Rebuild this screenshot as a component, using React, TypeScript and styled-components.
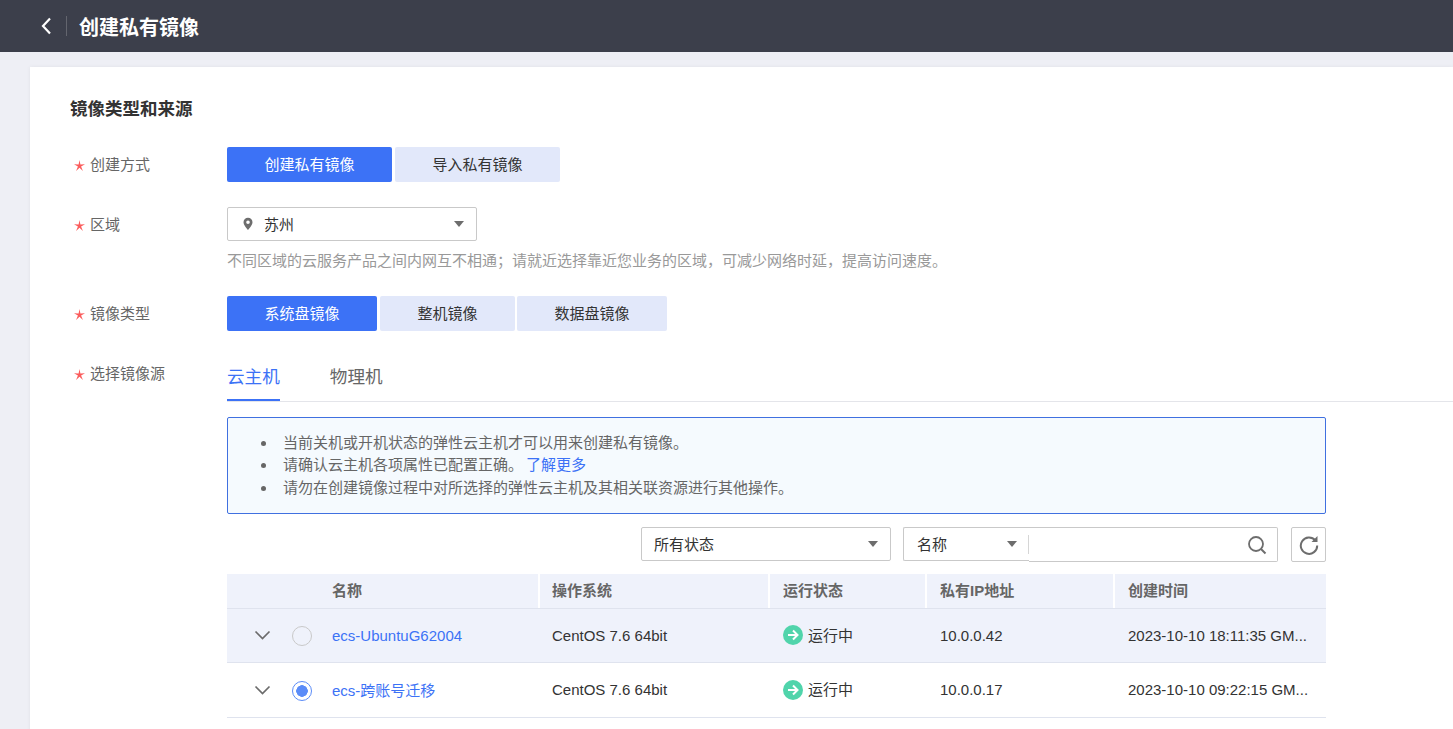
import styled, { createGlobalStyle } from "styled-components";

const GlobalStyle = createGlobalStyle`
  html, body {
    margin: 0;
    height: 100%;
    overflow: hidden;
    background: #eeeff5;
    font-family: "Liberation Sans", "Noto Sans CJK SC", sans-serif;
    font-size: 15px;
    color: #575d6c;
  }
  * { box-sizing: border-box; }
`;

const rows = [
  { name: "ecs-UbuntuG62004", ip: "10.0.0.42", time: "2023-10-10 18:11:35 GM...", selected: false },
  { name: "ecs-跨账号迁移", ip: "10.0.0.17", time: "2023-10-10 09:22:15 GM...", selected: true },
];

const Caret = () => (
  <svg width="10" height="6" viewBox="0 0 10 6">
    <path d="M0 0h10L5 6z" fill="#6d6d6d" />
  </svg>
);

const Star = () => (
  <StarIcon width="11" height="11" viewBox="0 0 11 11">
    <path d="M5.500 0 6.400 4.400 11 4.200 7.100 6.500 8.900 11 5.500 7.800 2.100 11 3.900 6.500 0 4.200 4.600 4.400z" fill="#fb5c5c" />
  </StarIcon>
);

export default function App() {
  return (
    <Page>
      <GlobalStyle />
      <TopBar>
        <svg width="12" height="18" viewBox="0 0 12 18">
          <path d="M10 1.500 3 9l7 7.500" fill="none" stroke="#fff" strokeWidth="2.200" />
        </svg>
        <TopDivider />
        <TopTitle>创建私有镜像</TopTitle>
      </TopBar>
      <Card>
        <SectionTitle>镜像类型和来源</SectionTitle>

        <FormRow $mb={25}>
          <Label><Star />创建方式</Label>
          <ButtonGroup>
            <SegButton $w={165} $active>创建私有镜像</SegButton>
            <SegButton $w={165} $ml={1}>导入私有镜像</SegButton>
          </ButtonGroup>
        </FormRow>

        <FormRow $mb={25}>
          <Label><Star />区域</Label>
          <div>
            <Select $w={250} $pad={14}>
              <svg width="12" height="14" viewBox="0 0 12 14">
                <path
                  fillRule="evenodd"
                  d="M6 .8a4.500 4.500 0 0 0-4.500 4.500C1.500 8.400 6 13 6 13s4.500-4.600 4.500-7.700A4.500 4.500 0 0 0 6 .8zm0 6.200a1.800 1.800 0 1 1 0-3.600 1.800 1.800 0 0 1 0 3.600z"
                  fill="#6d6d6d"
                />
              </svg>
              <RegionName>苏州</RegionName>
              <Caret />
            </Select>
            <Hint>不同区域的云服务产品之间内网互不相通；请就近选择靠近您业务的区域，可减少网络时延，提高访问速度。</Hint>
          </div>
        </FormRow>

        <FormRow $mb={25}>
          <Label><Star />镜像类型</Label>
          <ButtonGroup>
            <SegButton $w={150} $active>系统盘镜像</SegButton>
            <SegButton $w={135} $ml={1}>整机镜像</SegButton>
            <SegButton $w={150}>数据盘镜像</SegButton>
          </ButtonGroup>
        </FormRow>

        <FormRow $mb={0}>
          <Label><Star />选择镜像源</Label>
          <SourcePanel>
            <Tabs>
              <Tab $active>云主机</Tab>
              <Tab>物理机</Tab>
            </Tabs>
            <Content>
              <InfoBox>
                <li>当前关机或开机状态的弹性云主机才可以用来创建私有镜像。</li>
                <li>
                  请确认云主机各项属性已配置正确。<InfoLink>了解更多</InfoLink>
                </li>
                <li>请勿在创建镜像过程中对所选择的弹性云主机及其相关联资源进行其他操作。</li>
              </InfoBox>

              <Toolbar>
                <Select $w={250} $pad={12}>
                  <SelectText>所有状态</SelectText>
                  <Caret />
                </Select>
                <SearchGroup>
                  <Select $w={126} $pad={13} $joined>
                    <SelectText>名称</SelectText>
                    <Caret />
                    <SearchSep />
                  </Select>
                  <SearchInput>
                    <svg width="20" height="20" viewBox="0 0 20 20">
                      <circle cx="9" cy="9" r="7" fill="none" stroke="#6d6d6d" strokeWidth="1.800" />
                      <path d="m14 14 4.500 4.500" stroke="#6d6d6d" strokeWidth="2" />
                    </svg>
                  </SearchInput>
                </SearchGroup>
                <RefreshButton>
                  <svg width="20" height="20" viewBox="0 0 20 20">
                    <path d="M16.300 5.400A8.200 8.200 0 1 0 18.200 10.500" fill="none" stroke="#6d6d6d" strokeWidth="2" />
                    <path d="M18.500 1v6h-6z" fill="#6d6d6d" />
                  </svg>
                </RefreshButton>
              </Toolbar>

              <Table>
                <colgroup>
                  <col style={{ width: 313 }} />
                  <col style={{ width: 230 }} />
                  <col style={{ width: 157 }} />
                  <col style={{ width: 188 }} />
                  <col style={{ width: 211 }} />
                </colgroup>
                <thead>
                  <tr>
                    <NameHead>名称</NameHead>
                    <Head $pl={12}>操作系统</Head>
                    <Head>运行状态</Head>
                    <Head>私有IP地址</Head>
                    <Head $last>创建时间</Head>
                  </tr>
                </thead>
                <tbody>
                  {rows.map((row, i) => (
                    <Row key={row.name} $shaded={i === 0} $h={i === 0 ? 54 : 55}>
                      <Cell>
                        <NameCell>
                          <svg width="17" height="10" viewBox="0 0 17 10">
                            <path d="m1.500 1.500 7 7 7-7" fill="none" stroke="#6b6b6b" strokeWidth="1.700" />
                          </svg>
                          <Radio $checked={row.selected} />
                          <NameLink>{row.name}</NameLink>
                        </NameCell>
                      </Cell>
                      <Cell $pl={12}>CentOS 7.6 64bit</Cell>
                      <Cell>
                        <Status>
                          <svg width="20" height="20" viewBox="0 0 20 20">
                            <circle cx="10" cy="10" r="10" fill="#50d4ab" />
                            <path d="M5 10h9M10 5.500l4.500 4.500-4.500 4.500" fill="none" stroke="#fff" strokeWidth="2" />
                          </svg>
                          <StatusText>运行中</StatusText>
                        </Status>
                      </Cell>
                      <Cell>{row.ip}</Cell>
                      <Cell>{row.time}</Cell>
                    </Row>
                  ))}
                </tbody>
              </Table>
            </Content>
          </SourcePanel>
        </FormRow>
      </Card>
    </Page>
  );
}

const Page = styled.div`
  height: 729px;
  overflow: hidden;
`;

const TopBar = styled.header`
  height: 52px;
  background: #3c3f4b;
  display: flex;
  align-items: center;
  padding-left: 40px;
`;

const TopDivider = styled.span`
  width: 1px;
  height: 20px;
  background: #63656e;
  margin: 0 12px 0 14px;
`;

const TopTitle = styled.h1`
  margin: 0;
  font-size: 20px;
  font-weight: 700;
  color: #fff;
`;

const Card = styled.main`
  margin: 15px 0 0 30px;
  height: 700px;
  background: #fff;
  padding: 30px 0 0 40px;
  box-shadow: 0 0 4px rgba(0, 0, 0, 0.06);
`;

const SectionTitle = styled.h2`
  margin: 0 0 26px;
  height: 24px;
  line-height: 24px;
  font-size: 17.500px;
  font-weight: 700;
  color: #333;
`;

const FormRow = styled.div<{ $mb: number }>`
  display: flex;
  margin-bottom: ${(p) => p.$mb}px;
`;

const Label = styled.div`
  width: 157px;
  height: 35px;
  flex-shrink: 0;
  display: flex;
  align-items: center;
  gap: 5px;
  padding: 0 0 2px 4px;
  color: #666;
`;

const StarIcon = styled.svg`
  margin-top: 3px;
`;

const ButtonGroup = styled.div`
  display: flex;
  gap: 2px;
`;

const SegButton = styled.button<{ $w: number; $active?: boolean; $ml?: number }>`
  width: ${(p) => p.$w}px;
  height: 35px;
  margin-left: ${(p) => p.$ml ?? 0}px;
  padding: 0 0 2px;
  border: none;
  border-radius: 2px;
  font: inherit;
  background: ${(p) => (p.$active ? "#3c72f6" : "#e2e8fa")};
  color: ${(p) => (p.$active ? "#fff" : "#333")};
`;

const Select = styled.div<{ $w: number; $pad: number; $joined?: boolean }>`
  position: relative;
  display: flex;
  align-items: center;
  width: ${(p) => p.$w}px;
  height: 34px;
  padding: 0 12px 0 ${(p) => p.$pad}px;
  background: #fff;
  border: 1px solid #c9c9c9;
  border-radius: 2px;
  ${(p) => p.$joined && "border-right: none; border-radius: 2px 0 0 2px;"}
  color: #333;
`;

const RegionName = styled.span`
  flex: 1;
  margin: 0 0 2px 10px;
`;

const SelectText = styled.span`
  flex: 1;
  margin-bottom: 2px;
`;

const Hint = styled.div`
  margin-top: 10px;
  line-height: 20px;
  color: #999;
`;

const SourcePanel = styled.div`
  flex: 1;
  min-width: 0;
`;

const Tabs = styled.div`
  display: flex;
  gap: 50px;
  height: 46px;
  border-bottom: 1px solid #e4e5ea;
`;

const Tab = styled.div<{ $active?: boolean }>`
  height: 45px;
  padding-top: 8px;
  font-size: 17.600px;
  line-height: 26px;
  color: ${(p) => (p.$active ? "#3c72f6" : "#666")};
  border-bottom: 2px solid ${(p) => (p.$active ? "#3c72f6" : "transparent")};
`;

const Content = styled.div`
  width: 1099px;
`;

const InfoBox = styled.ul`
  margin: 15px 0 0;
  height: 97px;
  padding: 14px 0 0 49px;
  background: #f5fafe;
  border: 1px solid #4070e0;
  border-radius: 2px;
  line-height: 22.300px;
  color: #666;

  li {
    padding-left: 6px;
  }
`;

const InfoLink = styled.a`
  margin-left: 3px;
  color: #3c72f6;
`;

const Toolbar = styled.div`
  display: flex;
  justify-content: flex-end;
  align-items: flex-start;
  gap: 12px;
  margin-top: 13px;
`;

const SearchGroup = styled.div`
  display: flex;
`;

const SearchSep = styled.span`
  position: absolute;
  right: 0;
  top: 7px;
  width: 1px;
  height: 19px;
  background: #d6d6d6;
`;

const SearchInput = styled.div`
  width: 249px;
  height: 35px;
  display: flex;
  align-items: center;
  justify-content: flex-end;
  padding-right: 10px;
  border: 1px solid #c9c9c9;
  border-left: none;
  border-radius: 0 2px 2px 0;
`;

const RefreshButton = styled.div`
  width: 35px;
  height: 35px;
  margin-left: 1px;
  display: flex;
  align-items: center;
  justify-content: center;
  border: 1px solid #c9c9c9;
  border-radius: 2px;
`;

const Table = styled.table`
  width: 1099px;
  margin-top: 12px;
  border-collapse: collapse;
  table-layout: fixed;
`;

const Head = styled.th<{ $last?: boolean; $pl?: number }>`
  height: 34px;
  padding: 0 0 2px ${(p) => p.$pl ?? 13}px;
  text-align: left;
  font-weight: 700;
  color: #666;
  background: #eff2fb;
  border-bottom: 1px solid #dfe3ee;
  box-shadow: ${(p) => (p.$last ? "none" : "inset -2px 0 0 #fff")};
`;

const NameHead = styled(Head)`
  padding-left: 105px;
`;

const Row = styled.tr<{ $shaded: boolean; $h: number }>`
  height: ${(p) => p.$h}px;
  background: ${(p) => (p.$shaded ? "#eff2fb" : "#fff")};
`;

const Cell = styled.td<{ $pl?: number }>`
  padding: 0 0 0 ${(p) => p.$pl ?? 13}px;
  border-bottom: 1px solid #dfe3ee;
  color: #333;
  white-space: nowrap;
`;

const NameCell = styled.div`
  display: flex;
  align-items: center;
  padding-left: 14px;
`;

const Radio = styled.span<{ $checked: boolean }>`
  width: 20px;
  height: 20px;
  margin: 2px 20px 0 21px;
  border-radius: 50%;
  border: 1px solid ${(p) => (p.$checked ? "#5b8cf8" : "#c9c9c9")};
  background: ${(p) =>
    p.$checked
      ? "radial-gradient(circle, #5b8cf8 0, #5b8cf8 5.500px, #fff 6px)"
      : "transparent"};
`;

const NameLink = styled.a`
  color: #3c72f6;
`;

const Status = styled.span`
  display: flex;
  align-items: center;
  gap: 5px;
`;

const StatusText = styled.span`
  margin-bottom: 2px;
`;
